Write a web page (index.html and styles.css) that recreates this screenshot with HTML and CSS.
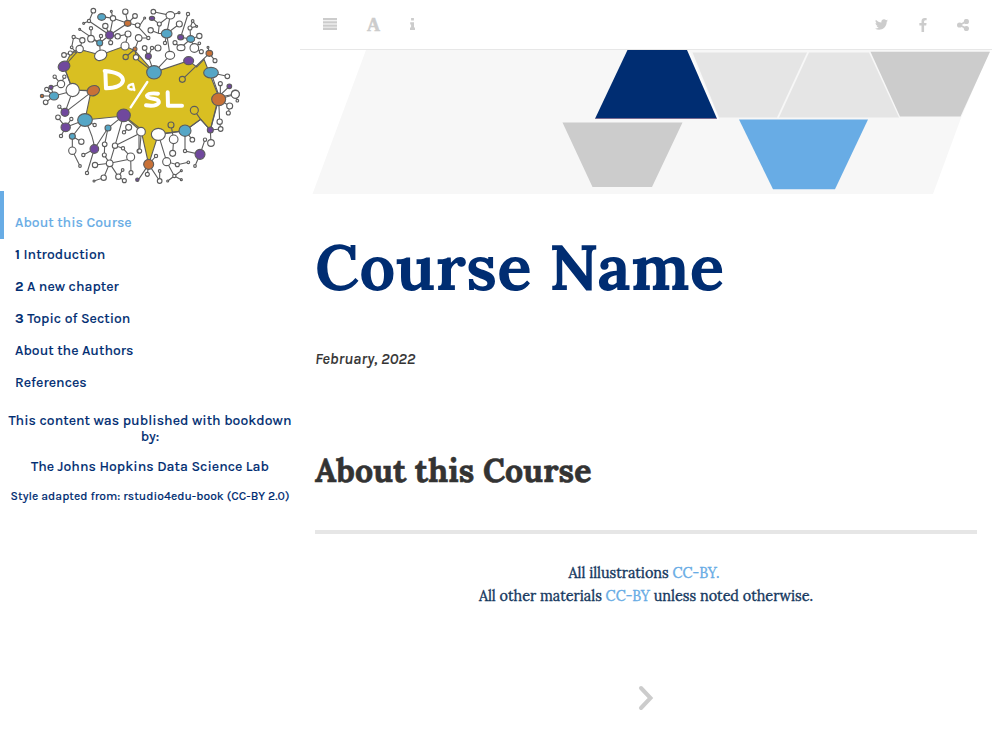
FILE: index.html
```html
<!DOCTYPE html>
<html lang="en">
<head>
<meta charset="utf-8">
<title>Course Name</title>
<link rel="stylesheet" href="styles.css">
</head>
<body>
<div class="book">
  <aside class="sidebar">
    <svg class="logo" viewBox="0 0 624 570" aria-label="DaSL">
      <path class="brain" d="M87 200L105 165Q130 145 155 154L196 165L270 138L300 152L357 217L461 182L485 201L507 178L551 290L526 390L497 358L450 392L370 403L341 493L319 395L266 348L150 360L168 273L113 270Z"/>
      <g class="edges">
        <path d="M175 32L162 63L224 105L278 70L300 48M278 70L271 35M278 70L308 76M200 50L234 55L229 34M234 55L278 70M224 105L234 55M224 105L211 78M224 105L248 109L279 102M224 105L227 128M224 105L194 129L134 88M194 129L198 108M194 129L196 165M168 85V116L194 129M279 102L270 138M162 63L146 70M116 111L142 121L134 147M116 111L110 142L125 160M134 147L87 200M87 165L106 159L134 147M300 147L272 171M300 147L303 172M300 147L312 115M87 200L113 270L175 272M78 252L59 230M78 252L88 230M78 252L48 262L35 268M48 262L57 289"/>
        <path transform="translate(309)" d="M46 35L97 46L123 38M97 46L64 72L42 55M64 72L61 100L38 91M97 46L86 101L124 72M61 100L86 101L81 129M86 101L96 166L48 217M31 169L20 144M31 169L42 144L60 144M31 169L48 217M0 84L20 54M0 80L31 114L5 114M150 42L128 112L158 117L184 108M158 117L156 84L176 79L164 63M156 84L164 63M158 117L128 143L111 128M158 117L169 144L184 130M169 144L190 155M214 160L210 142M214 160L231 182M214 160L133 238M219 218L268 229M219 218L242 285M247 251V285L274 259M242 292L292 282M0 180L48 217"/>
        <path transform="translate(0,270)" d="M21 18L57 18L113 3M57 18L32 37M57 18L35 0M90 67L113 3M90 67L73 50M90 67L175 2M92 112L69 82M92 112L109 87M92 112L78 138M92 112L150 90L179 105M150 90L112 139V182L135 228M112 139L139 155M150 90Q178 145 178 177L145 195M178 177L156 249M178 177L219 114L266 76M219 114L209 163L208 195L224 220M266 76L240 167L264 175L287 201L288 248M240 167L315 130M240 167L224 220L180 225M224 220L287 207M224 220L206 263L177 273M224 220L250 260L268 272M250 260L263 240M266 76L315 115M281 112L267 127M312 115V183"/>
        <path transform="translate(309,270)" d="M10 125L5 183M61 133L141 122M32 223L54 198M32 223L28 253M32 223L2 268M32 223L65 273V243M61 133L86 215L118 224L151 217M86 215L109 258L89 273M109 258L130 242M109 258L130 269M99 105L107 148L104 190M141 122L163 149M141 122V183L186 193L201 149M186 193L171 228M141 122L188 88L169 61M188 88L217 120L248 117L245 95L242 28L275 48L271 69M217 120L219 159M242 28L292 13L298 32M217 120L242 28"/>
      </g>
      <g class="nodes">
        <circle cx="175" cy="32" r="7"/><circle cx="162" cy="63" r="5"/><circle cx="146" cy="70" r="3"/><circle cx="229" cy="34" r="3"/><circle cx="234" cy="55" r="8"/><circle cx="271" cy="35" r="8"/><circle cx="300" cy="48" r="7"/><circle cx="308" cy="76" r="7"/><circle cx="211" cy="78" r="8"/><circle cx="134" cy="88" r="3"/><circle cx="168" cy="85" r="5"/><circle cx="168" cy="116" r="10"/><circle cx="198" cy="108" r="5"/><circle cx="227" cy="128" r="6"/><circle cx="248" cy="109" r="8"/><circle cx="279" cy="102" r="9"/><circle cx="270" cy="138" r="12"/><ellipse cx="197" cy="166" rx="19" ry="15" transform="rotate(-25 197 166)"/><circle cx="116" cy="111" r="5"/><circle cx="142" cy="121" r="8"/><circle cx="110" cy="142" r="4"/><circle cx="134" cy="147" r="11"/><circle cx="87" cy="165" r="7"/><circle cx="106" cy="159" r="6"/><circle class="y" cx="272" cy="171" r="8"/><circle cx="303" cy="172" r="8"/><circle cx="59" cy="230" r="5"/><circle cx="88" cy="230" r="5"/><circle cx="78" cy="252" r="11"/><circle cx="35" cy="268" r="6"/><circle cx="113" cy="270" r="20"/>
        <ellipse class="b" cx="200" cy="51" rx="12" ry="10"/><ellipse class="o" cx="278" cy="70" rx="10" ry="9"/><circle class="p" cx="224" cy="105" r="12"/><circle class="b" cx="194" cy="129" r="9"/><circle class="o" cx="300" cy="147" r="6"/><ellipse class="p" cx="87" cy="199" rx="18" ry="15" transform="rotate(-25 87 199)"/><circle class="p" cx="48" cy="262" r="6"/><ellipse class="o" cx="175" cy="272" rx="19" ry="15" transform="rotate(-20 175 272)"/>
        <g transform="translate(309)">
          <circle cx="46" cy="35" r="7"/><ellipse cx="97" cy="46" rx="13" ry="11"/><circle cx="123" cy="38" r="3"/><circle cx="64" cy="72" r="6"/><circle cx="38" cy="91" r="8"/><circle cx="124" cy="72" r="9"/><circle cx="81" cy="129" r="5"/><ellipse cx="96" cy="166" rx="14" ry="12"/><circle cx="20" cy="144" r="7"/><circle cx="42" cy="144" r="5"/><circle cx="60" cy="144" r="9"/><circle cx="20" cy="54" r="3"/><circle cx="31" cy="114" r="5"/><circle cx="2" cy="114" r="10"/><circle cx="150" cy="42" r="5"/><circle cx="156" cy="84" r="6"/><circle cx="176" cy="79" r="3"/><circle cx="164" cy="63" r="4"/><circle cx="184" cy="108" r="8"/><ellipse cx="129" cy="143" rx="12" ry="9"/><circle cx="111" cy="128" r="6"/><circle cx="169" cy="144" r="13"/><circle cx="184" cy="130" r="4"/><circle cx="190" cy="155" r="6"/><circle cx="210" cy="142" r="3"/><circle cx="231" cy="182" r="6"/><circle class="y" cx="133" cy="238" r="9"/><circle cx="268" cy="229" r="7"/><circle cx="247" cy="251" r="6"/><circle cx="292" cy="282" r="12"/>
          <ellipse class="p" cx="42" cy="55" rx="8" ry="6"/><ellipse class="b" cx="86" cy="101" rx="16" ry="13"/><circle class="p" cx="31" cy="169" r="9"/><ellipse class="b" cx="48" cy="217" rx="22" ry="20"/><ellipse class="p" cx="128" cy="112" rx="9" ry="8"/><ellipse class="b" cx="158" cy="117" rx="12" ry="10"/><ellipse class="p" cx="152" cy="182" rx="15" ry="12"/><ellipse class="o" cx="214" cy="160" rx="10" ry="9"/><ellipse class="b" cx="219" cy="218" rx="22" ry="16"/><circle class="p" cx="274" cy="259" r="7"/>
        </g>
        <g transform="translate(0,270)">
          <circle cx="32" cy="37" r="7"/><circle cx="73" cy="50" r="5"/><circle cx="69" cy="82" r="7"/><circle cx="109" cy="87" r="5"/><circle cx="78" cy="138" r="5"/><circle cx="179" cy="105" r="5"/><circle cx="139" cy="155" r="8"/><circle cx="112" cy="182" r="11"/><circle cx="135" cy="228" r="4"/><circle cx="145" cy="195" r="5"/><circle cx="156" cy="249" r="5"/><circle cx="209" cy="163" r="7"/><circle cx="208" cy="195" r="6"/><circle cx="240" cy="167" r="8"/><circle cx="264" cy="175" r="5"/><circle cx="287" cy="201" r="12"/><circle cx="288" cy="248" r="6"/><circle cx="224" cy="220" r="10"/><circle cx="180" cy="225" r="8"/><circle cx="206" cy="263" r="8"/><circle cx="177" cy="273" r="3"/><circle cx="250" cy="260" r="8"/><circle cx="268" cy="272" r="6"/><circle cx="263" cy="240" r="4"/><circle cx="281" cy="112" r="9"/><circle cx="267" cy="127" r="5"/><circle cx="312" cy="183" r="6"/>
          <circle class="o" cx="21" cy="18" r="5"/><ellipse class="b" cx="57" cy="18" rx="14" ry="12"/><circle class="p" cx="90" cy="67" r="12"/><ellipse class="b" cx="150" cy="90" rx="22" ry="19"/><ellipse class="p" cx="92" cy="112" rx="14" ry="13"/><circle class="b" cx="112" cy="139" r="9"/><circle class="b" cx="219" cy="114" r="9"/><circle class="p" cx="178" cy="177" r="13"/><ellipse class="p" cx="266" cy="76" rx="20" ry="19"/><circle class="p" cx="307" cy="269" r="5"/>
        </g>
        <g transform="translate(309,270)">
          <circle cx="9" cy="125" r="13"/><circle cx="5" cy="183" r="6"/><ellipse cx="61" cy="133" rx="21" ry="18"/><circle class="y" cx="99" cy="105" r="9"/><circle cx="107" cy="148" r="13"/><circle cx="104" cy="190" r="9"/><circle cx="54" cy="198" r="5"/><circle cx="28" cy="253" r="6"/><circle cx="65" cy="273" r="7"/><circle cx="65" cy="243" r="4"/><circle cx="86" cy="215" r="12"/><circle cx="118" cy="224" r="6"/><circle cx="151" cy="217" r="4"/><circle cx="109" cy="258" r="5"/><circle cx="89" cy="273" r="3"/><circle cx="130" cy="242" r="3"/><circle cx="130" cy="269" r="3"/><circle cx="163" cy="149" r="7"/><circle cx="141" cy="183" r="5"/><circle cx="201" cy="149" r="5"/><circle cx="171" cy="228" r="4"/><circle class="y" cx="169" cy="61" r="12"/><circle cx="248" cy="117" r="7"/><circle cx="245" cy="95" r="8"/><circle cx="219" cy="159" r="10"/><circle cx="275" cy="48" r="9"/><circle cx="271" cy="69" r="6"/><circle cx="292" cy="13" r="12"/><circle cx="298" cy="32" r="4"/>
          <ellipse class="b" cx="141" cy="122" rx="18" ry="17"/><circle class="o" cx="32" cy="223" r="15"/><circle class="p" cx="186" cy="193" r="15"/><circle class="p" cx="217" cy="120" r="9"/><ellipse class="o" cx="242" cy="28" rx="21" ry="19"/>
        </g>
      </g>
      <g class="lettering">
        <path d="M211 214L213 264M209 213Q264 218 264 242Q260 263 213 265"/>
        <path class="small" d="M298 270L294 252Q277 255 280 264Q286 271 297 267"/>
        <path class="slash" d="M337 246L287 322"/>
        <path d="M369 281Q340 278 336 287Q337 294 355 296Q374 299 371 309Q364 320 333 316M398 277L399 317H441"/>
      </g>
    </svg>
    <nav>
      <ul class="summary">
        <li class="active"><a>About this Course</a></li>
        <li><a><b>1</b> Introduction</a></li>
        <li><a><b>2</b> A new chapter</a></li>
        <li><a><b>3</b> Topic of Section</a></li>
        <li><a>About the Authors</a></li>
        <li><a>References</a></li>
      </ul>
    </nav>
    <div class="credits">
      <p class="published">This content was published with bookdown by:</p>
      <p class="lab">The Johns Hopkins Data Science Lab</p>
      <p class="style">Style adapted from: rstudio4edu-book (CC-BY 2.0)</p>
    </div>
  </aside>
  <div class="body">
    <header class="toolbar">
      <div class="tools">
        <svg width="14" height="12" viewBox="0 0 14 12"><path d="M0 0h14v2.3H0zM0 3.2h14v2.3H0zM0 6.4h14v2.3H0zM0 9.6h14v2.3H0z"/></svg>
        <span class="font-icon">A</span>
        <svg width="5" height="12" viewBox="0 0 5 12"><path d="M1.1 0h2.8v2.6H1.1zM.2 4.2H4v5.3h1.1V12H0V9.5h1.1V6.6H.2z"/></svg>
      </div>
      <div class="share">
        <svg width="13" height="14" viewBox="44 128 1576 1664"><path d="M1620 408q-67 98-162 167 1 14 1 42 0 130-38 259.5t-115.5 248.5-184.5 210.5-258 146-323 54.5q-271 0-496-145 35 4 78 4 225 0 401-138-105-2-188-64.5t-114-159.5q33 5 61 5 43 0 85-11-112-23-185.5-111.5t-73.5-205.5v-4q68 38 146 41-66-44-105-115t-39-154q0-88 44-163 121 149 294.5 238.5t371.5 99.5q-8-38-8-74 0-134 94.5-228.5t228.5-94.5q140 0 236 102 109-21 205-78-37 115-142 178 93-10 186-50z"/></svg>
        <svg width="8" height="14" viewBox="479 0 864 1664"><path d="M1343 12v264h-157q-86 0-116 36t-30 108v189h293l-39 296h-254v759h-306v-759h-255v-296h255v-218q0-186 104-288.5t277-102.5q147 0 228 12z"/></svg>
        <svg width="12" height="12" viewBox="0 0 12 12"><path class="branch" d="M9.4 2.5L2.6 6L9.4 9.5"/><circle cx="9.4" cy="2.5" r="2.6"/><circle cx="2.6" cy="6" r="2.6"/><circle cx="9.4" cy="9.5" r="2.6"/></svg>
      </div>
    </header>
    <svg class="banner" viewBox="300 50 692 145">
      <path fill="#f7f7f7" d="M366 50H990L961 118L933 194H312.5z"/>
      <path fill="#e5e5e5" d="M692.5 52.5H807L777 117.5H719zM809 52.5H869L899 117.5H779z"/>
      <path fill="#ccc" d="M870.5 51.7H990L960.5 116.5H900zM562.5 122.5H682.5L652 187H592.5z"/>
      <path fill="#fff" d="M687 50H689L719 118.5V120H717z" opacity=".7"/>
      <path fill="#002d72" d="M627.5 50H687L717 118.7H595z"/>
      <path stroke="#90708f" stroke-width=".7" d="M595.5 118.5H717"/>
      <path fill="#68ace5" d="M739 119.5H868L835 189.3H773z"/>
    </svg>
    <main>
      <h1>Course Name</h1>
      <p class="date">February, 2022</p>
      <h2>About this Course</h2>
      <hr>
      <footer>
        <p class="line-one">All illustrations <a>CC-BY.</a>&nbsp;</p>
        <p class="line-two">All other materials <a>CC-BY</a> unless noted otherwise.</p>
      </footer>
    </main>
    <svg class="next" width="16" height="26" viewBox="0 0 16 26"><path d="M3 3L12.5 13L3 23"/></svg>
  </div>
</div>
</body>
</html>
```
FILE: styles.css
```css
* { box-sizing: border-box; }
body, p, h1, h2, ul { margin: 0; padding: 0; }
body {
  background: #fff;
  color: #333;
  font-family: Karla, Inter, "Liberation Sans", sans-serif;
  overflow: hidden;
}
.book { display: flex; height: 744px; }
.sidebar { width: 300px; color: #002d72; font-size: 14px; font-weight: 500; letter-spacing: .04px; -webkit-text-stroke: .12px; }
.logo { display: block; width: 208px; height: 190px; margin: 0 0 1px 35px; }
.edges, .nodes, .brain { stroke: #5c5c5c; stroke-width: 3.3; }
.brain { fill: #d9bf22; }
.edges { fill: none; }
.nodes { fill: #fff; }
.b { fill: #55a6c6; }
.p { fill: #70489d; }
.o { fill: #c87137; }
.y { fill: #d9bf22; }
.lettering { fill: none; stroke: #fff; stroke-width: 12; stroke-linecap: round; stroke-linejoin: round; }
.lettering .small { stroke-width: 7; }
.lettering .slash { stroke-width: 7; }
.summary { list-style: none; }
.summary li { height: 32px; line-height: 32px; padding-left: 15px; white-space: nowrap; }
.summary .active { height: 48px; padding: 16px 0 0 11px; border-left: 4px solid #68ace5; color: #68ace5; }
.credits { display: flex; flex-direction: column; gap: 14px; padding: 14px 7px 0; text-align: center; line-height: 16px; }
.style { font-size: 12px; line-height: 14px; }
.body { width: 692px; display: flex; flex-direction: column; }
.toolbar { height: 50px; flex: none; display: flex; justify-content: space-between; padding: 0 23px; border-bottom: 1px solid #e7e7e7; fill: #ccc; }
.tools { display: flex; gap: 30px; align-items: center; padding-bottom: 1px; }
.share { display: flex; gap: 30.5px; align-items: center; }
.branch { fill: none; stroke: #ccc; stroke-width: 1.8; }
.font-icon { width: 13px; padding-top: 2px; color: #ccc; font: bold 18px/18px "Liberation Serif", serif; -webkit-text-stroke: .5px #ccc; }
.banner { display: block; width: 692px; height: 145px; flex: none; }
main { padding: 0 15px; }
h1 { margin-top: 32px; font: bold 64px/80px Lora, "Liberation Serif", serif; color: #002d72; letter-spacing: .2px; white-space: nowrap; }
.date { margin-top: 41px; font-size: 16px; line-height: 22px; font-style: italic; font-weight: 500; -webkit-text-stroke: .15px; }
h2 { margin-top: 80px; font: bold 32px/42px Lora, "Liberation Serif", serif; letter-spacing: .12px; white-space: nowrap; -webkit-text-stroke: .6px; }
hr { margin: 38px 0 28px; height: 4px; border: 0; background: #e6e6e6; }
footer { font: 14.4px/23px Lora, "Liberation Serif", serif; color: #14375e; text-align: center; -webkit-text-stroke: .35px; }
footer a { color: #68ace5; }
.next { margin: 77px 0 0 338px; }
.next path { fill: none; stroke: #ccc; stroke-width: 4; stroke-linecap: round; }
```
